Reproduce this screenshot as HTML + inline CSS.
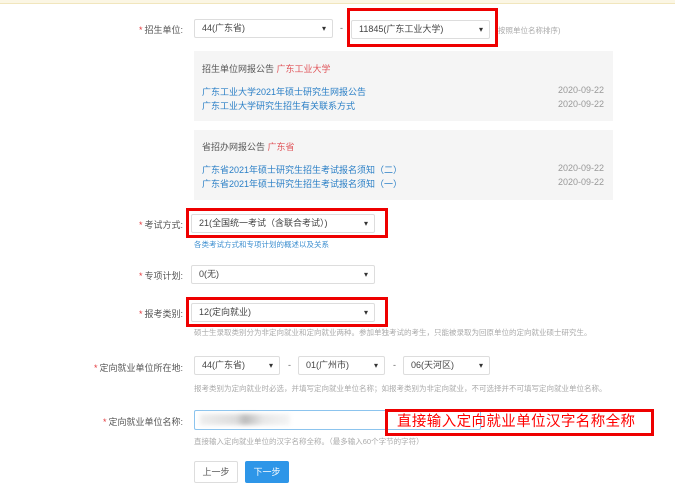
<!DOCTYPE html>
<html><head><meta charset="utf-8"><style>
*{margin:0;padding:0;box-sizing:border-box}
body{width:675px;height:500px;background:#fff;position:relative;overflow:hidden;font-family:"Liberation Sans","Noto Sans CJK SC",sans-serif;font-size:9px;color:#555}
.a{position:absolute}
.topl{left:0;top:0;width:675px;height:4px;background:#fbf6e4;border-bottom:1px solid #f1e6bd}
.lbl{position:absolute;text-align:right;right:492px;font-size:9px;color:#555;white-space:nowrap}
.lbl b{color:#e4393c;font-weight:normal;margin-right:2px}
.sel{position:absolute;border:1px solid #ddd;border-radius:2px;background:#fff;font-size:9px;color:#444;padding-left:7px;line-height:17px;height:19px}
.sel:after{content:"▾";position:absolute;right:6px;top:0;font-size:8px;color:#333}
.red{position:absolute;border:3px solid #e00}
.box{position:absolute;left:194px;width:419px;background:#f5f5f5}
.lk{position:absolute;left:8px;color:#2a7fc6;font-size:9px;white-space:nowrap}
.dt{position:absolute;right:9px;color:#999;font-size:9px}
.hint{position:absolute;color:#aaa;font-size:7.5px;white-space:nowrap}
.dash{position:absolute;color:#666;font-size:9px}
</style></head><body>
<div class="a topl"></div>

<div class="lbl" style="top:23px"><b>*</b>招生单位:</div>
<div class="sel" style="left:194px;top:19px;width:139px">44(广东省)</div>
<div class="dash" style="left:340px;top:23px">-</div>
<div class="sel" style="left:351px;top:20px;width:139px">11845(广东工业大学)</div>
<div class="red" style="left:347px;top:8px;width:151px;height:39px"></div>
<div class="hint" style="left:498px;top:25px">按照单位名称排序)</div>

<div class="box" style="top:51px;height:70px">
<div class="a" style="left:8px;top:11px;color:#555">招生单位网报公告 <span style="color:#e0555a">广东工业大学</span></div>
<div class="lk" style="top:34px">广东工业大学2021年硕士研究生网报公告</div><div class="dt" style="top:34px">2020-09-22</div>
<div class="lk" style="top:48px">广东工业大学研究生招生有关联系方式</div><div class="dt" style="top:48px">2020-09-22</div>
</div>
<div class="box" style="top:130px;height:70px">
<div class="a" style="left:8px;top:10px;color:#555">省招办网报公告 <span style="color:#e0555a">广东省</span></div>
<div class="lk" style="top:33px">广东省2021年硕士研究生招生考试报名须知（二）</div><div class="dt" style="top:33px">2020-09-22</div>
<div class="lk" style="top:47px">广东省2021年硕士研究生招生考试报名须知（一）</div><div class="dt" style="top:47px">2020-09-22</div>
</div>

<div class="lbl" style="top:218px"><b>*</b>考试方式:</div>
<div class="sel" style="left:191px;top:214px;width:184px">21(全国统一考试（含联合考试）)</div>
<div class="red" style="left:186px;top:208px;width:202px;height:30px"></div>
<div class="hint" style="left:194px;top:239px;color:#3d8fd0">各类考试方式和专项计划的概述以及关系</div>

<div class="lbl" style="top:269px"><b>*</b>专项计划:</div>
<div class="sel" style="left:191px;top:265px;width:184px">0(无)</div>

<div class="lbl" style="top:307px"><b>*</b>报考类别:</div>
<div class="sel" style="left:191px;top:303px;width:184px">12(定向就业)</div>
<div class="red" style="left:186px;top:297px;width:202px;height:30px"></div>
<div class="hint" style="left:194px;top:327px">硕士生录取类别分为非定向就业和定向就业两种。参加单独考试的考生，只能被录取为回原单位的定向就业硕士研究生。</div>

<div class="lbl" style="top:361px"><b>*</b>定向就业单位所在地:</div>
<div class="sel" style="left:194px;top:356px;width:86px">44(广东省)</div>
<div class="dash" style="left:288px;top:360px">-</div>
<div class="sel" style="left:298px;top:356px;width:87px">01(广州市)</div>
<div class="dash" style="left:393px;top:360px">-</div>
<div class="sel" style="left:403px;top:356px;width:87px">06(天河区)</div>
<div class="hint" style="left:194px;top:383px">报考类别为定向就业时必选，并填写定向就业单位名称；如报考类别为非定向就业，不可选择并不可填写定向就业单位名称。</div>

<div class="lbl" style="top:415px"><b>*</b>定向就业单位名称:</div>
<div class="a" style="left:194px;top:410px;width:287px;height:20px;border:1px solid #8cc4ee;border-radius:2px;background:#fff"></div>
<div class="a" style="left:200px;top:414px;width:90px;height:11px;background:linear-gradient(90deg,#eee,#ddd 40%,#bbb 50%,#e8e8e8 70%,#f4f4f4);filter:blur(2px)"></div>
<div class="red" style="left:385px;top:409px;width:269px;height:27px"></div>
<div class="a" style="left:397px;top:413px;color:#f00;font-size:14.5px;letter-spacing:0.4px;white-space:nowrap;line-height:19px">直接输入定向就业单位汉字名称全称</div>
<div class="hint" style="left:194px;top:436px">直接输入定向就业单位的汉字名称全称。（最多输入60个字节的字符）</div>

<div class="a" style="left:194px;top:461px;width:44px;height:22px;border:1px solid #ddd;border-radius:2px;text-align:center;line-height:20px;color:#555">上一步</div>
<div class="a" style="left:245px;top:461px;width:44px;height:22px;background:#2e96e8;border-radius:2px;text-align:center;line-height:22px;color:#fff">下一步</div>
</body></html>
